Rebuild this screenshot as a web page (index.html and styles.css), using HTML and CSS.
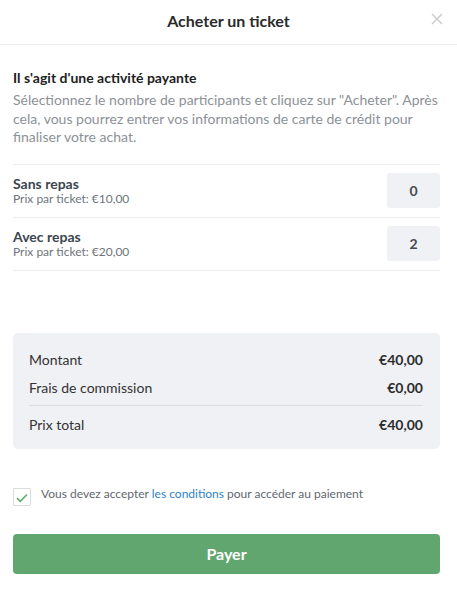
FILE: index.html
```html
<!DOCTYPE html>
<html lang="fr">
<head>
<meta charset="utf-8">
<title>Acheter un ticket</title>
<link rel="stylesheet" href="styles.css">
</head>
<body>
<div class="modal">
  <header class="modal-header">
    <h1 class="modal-title">Acheter un ticket</h1>
    <button class="close" aria-label="Fermer">
      <svg width="12" height="12" viewBox="0 0 12 12"><path d="M1 1L11 11M11 1L1 11" stroke="#c9c9c9" stroke-width="1.4" fill="none"/></svg>
    </button>
  </header>
  <main class="modal-body">
    <h2 class="intro-title">Il s'agit d'une activité payante</h2>
    <p class="intro-text">Sélectionnez le nombre de participants et cliquez sur "Acheter". Après cela, vous pourrez entrer vos informations de carte de crédit pour finaliser votre achat.</p>
    <div class="tickets">
      <div class="ticket">
        <div class="ticket-info">
          <div class="ticket-name">Sans repas</div>
          <div class="ticket-price">Prix par ticket: €10,00</div>
        </div>
        <div class="qty">0</div>
      </div>
      <div class="ticket">
        <div class="ticket-info">
          <div class="ticket-name">Avec repas</div>
          <div class="ticket-price">Prix par ticket: €20,00</div>
        </div>
        <div class="qty">2</div>
      </div>
    </div>
    <div class="summary">
      <div class="sum-row"><span>Montant</span><span class="val">€40,00</span></div>
      <div class="sum-row"><span>Frais de commission</span><span class="val">€0,00</span></div>
      <div class="sum-row total"><span>Prix total</span><span class="val">€40,00</span></div>
    </div>
    <label class="terms">
      <span class="checkbox">
        <svg width="12" height="10" viewBox="0 0 12 10"><path d="M1 5.2L4.3 8.3L11 1.5" stroke="#5fae6a" stroke-width="1.6" fill="none"/></svg>
      </span>
      <span class="terms-text">Vous devez accepter <a class="link">les conditions</a> pour accéder au paiement</span>
    </label>
    <button class="pay">Payer</button>
  </main>
</div>
</body>
</html>
```
FILE: styles.css
```css
* { box-sizing: border-box; }
html, body { margin: 0; padding: 0; background: #fff; }
body { font-family: Lato, "Open Sans", sans-serif; color: #333; }
.modal { width: 457px; }
.modal-header {
  height: 45px;
  border-bottom: 1px solid #ececee;
  display: flex;
  align-items: center;
  justify-content: center;
  position: relative;
}
.modal-title { margin: 0; font-size: 16px; font-weight: 700; color: #2b2b2b; padding-bottom: 3px; }
.close {
  position: absolute; right: 14px; top: 13px;
  border: 0; background: none; padding: 0; width: 12px; height: 12px; display: flex;
}
.modal-body { padding: 24px 17px 0 13px; }
.intro-title { margin: 0; font-size: 14px; font-weight: 700; color: #222; line-height: 18px; }
.intro-text { margin: 4px 0 0; font-size: 14px; line-height: 18.5px; color: #8c9197; }
.tickets { margin-top: 17px; border-top: 1px solid #efeff1; }
.ticket {
  display: flex; align-items: center; justify-content: space-between;
  height: 53px; border-bottom: 1px solid #efeff1;
}
.ticket-name { font-size: 14px; font-weight: 700; color: #3b4550; line-height: 17px; }
.ticket-price { font-size: 12px; color: #6d747b; line-height: 14px; }
.qty {
  width: 53px; height: 35px; background: #f0f1f4; border-radius: 3px;
  display: flex; align-items: center; justify-content: center;
  font-size: 14px; font-weight: 700; color: #444c55;
}
.summary {
  margin-top: 62px; background: #f0f1f5; border-radius: 5px;
  padding: 13px 17px 5px 16px;
}
.sum-row {
  display: flex; justify-content: space-between; align-items: center;
  font-size: 14px; color: #333; height: 28px;
}
.sum-row .val { font-weight: 700; color: #2d2d2d; }
.sum-row.total { border-top: 1px solid #dcdde1; margin-top: 3px; height: 39px; }
.terms { display: flex; align-items: flex-start; margin-top: 38px; }
.checkbox {
  width: 18px; height: 18px; border: 1px solid #dcdcdc; border-radius: 1px; margin-top: 1px;
  display: flex; align-items: center; justify-content: center; padding-top: 2px;
}
.terms-text { margin-left: 10px; font-size: 12px; color: #5f676f; line-height: 14px; }
.link { color: #2f7fc9; }
.pay {
  display: block; width: 100%; margin-top: 28px; height: 40px; border: 0; border-radius: 4px;
  background: #62a66f; color: #fff; font-family: Lato, sans-serif; font-size: 16px; font-weight: 700;
}
```
